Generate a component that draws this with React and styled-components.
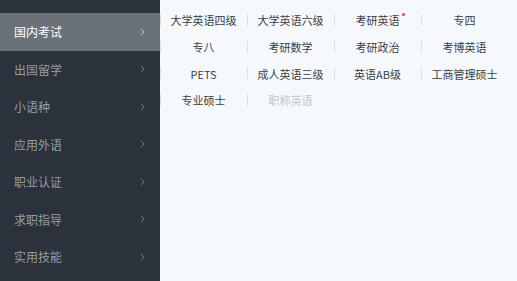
import styled, { createGlobalStyle } from 'styled-components'

const Global = createGlobalStyle`
  html, body, #root { margin: 0; padding: 0; height: 100%; }
  body {
    font-family: "Noto Sans CJK SC", "Noto Sans", sans-serif;
    background: #f5f9fc;
    overflow: hidden;
  }
`

const Page = styled.div`
  display: flex;
  height: 100vh;
`

const Side = styled.ul`
  list-style: none;
  margin: 0;
  padding: 13px 0 0;
  width: 160px;
  flex-shrink: 0;
  background: #2b323b;
`

const SideItem = styled.li`
  height: 37.5px;
  display: flex;
  align-items: center;
  justify-content: space-between;
  padding: 0 15px 0 14px;
  font-size: 12px;
  color: ${p => (p.$active ? '#ffffff' : '#979ca3')};
  background: ${p => (p.$active ? '#6b7179' : 'transparent')};
  svg { stroke: ${p => (p.$active ? '#c3c6ca' : '#737a83')}; }
`

const Panel = styled.div`
  flex: 1;
  padding-top: 7px;
  display: grid;
  grid-template-columns: repeat(4, 87px);
  grid-auto-rows: 26.67px;
  align-content: start;
`

const Cell = styled.div`
  position: relative;
  display: flex;
  align-items: center;
  justify-content: center;
  font-size: 11px;
  color: ${p => (p.$off ? '#c4c6c9' : '#3a3f46')};

  &::before {
    content: '';
    position: absolute;
    left: 0;
    top: 7px;
    height: 12px;
    width: 1px;
    background: #dcdfe3;
  }
`

const Hot = styled.span`
  position: relative;
  &::after {
    content: '';
    position: absolute;
    right: -5px;
    top: 1px;
    width: 3px;
    height: 3px;
    border-radius: 50%;
    background: #e8453c;
  }
`

const Chevron = () => (
  <svg width="5" height="8" viewBox="0 0 5 8" fill="none" strokeWidth="1">
    <path d="M1 0.8 L3.8 4 L1 7.2" />
  </svg>
)

const menu = ['国内考试', '出国留学', '小语种', '应用外语', '职业认证', '求职指导', '实用技能']

const exams = [
  { t: '大学英语四级' },
  { t: '大学英语六级' },
  { t: '考研英语', hot: true },
  { t: '专四' },
  { t: '专八' },
  { t: '考研数学' },
  { t: '考研政治' },
  { t: '考博英语' },
  { t: 'PETS' },
  { t: '成人英语三级' },
  { t: '英语AB级' },
  { t: '工商管理硕士' },
  { t: '专业硕士' },
  { t: '职称英语', off: true },
]

export default function App() {
  return (
    <Page>
      <Global />
      <Side>
        {menu.map((m, i) => (
          <SideItem key={m} $active={i === 0}>
            {m}
            <Chevron />
          </SideItem>
        ))}
      </Side>
      <Panel>
        {exams.map(e => (
          <Cell key={e.t} $off={e.off}>
            {e.hot ? <Hot>{e.t}</Hot> : e.t}
          </Cell>
        ))}
      </Panel>
    </Page>
  )
}
